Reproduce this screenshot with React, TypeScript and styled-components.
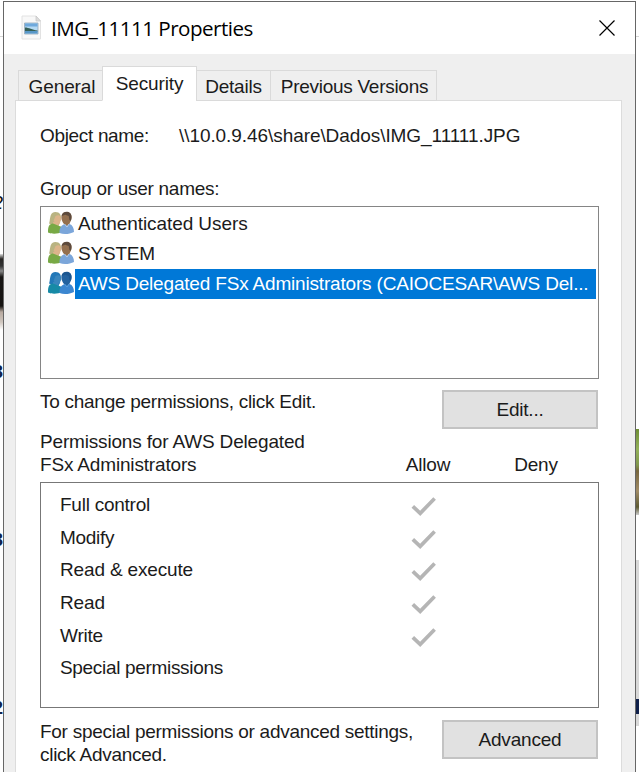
import React from 'react';
import styled, { createGlobalStyle } from 'styled-components';

const GlobalStyle = createGlobalStyle`
  * { box-sizing: border-box; }
  html, body { margin: 0; padding: 0; background: #fff; overflow: hidden; }
`;

const Desktop = styled.div`
  display: grid;
  grid-template-columns: 3px 633px 3px;
  width: 639px;
  height: 772px;
  overflow: hidden;
  background: #fff;
  color: #1b1b1b;
  font: 19px/24px 'Liberation Sans', Arial, sans-serif;
  white-space: nowrap;
`;

const Edge = styled.div`
  display: flex;
  flex-direction: column;
  min-width: 0;
  overflow: hidden;
`;

const EdgeBlock = styled.div<{ $gap: number; $h: number; $bg: string }>`
  flex: none;
  margin-top: ${p => p.$gap}px;
  height: ${p => p.$h}px;
  background: ${p => p.$bg};
`;

const EdgeGlyph = styled.div<{ $gap: number; $color: string; $italic?: boolean }>`
  flex: none;
  display: flex;
  justify-content: flex-end;
  margin-top: ${p => p.$gap}px;
  height: 20px;
  line-height: 20px;
  font-size: 19px;
  font-style: ${p => (p.$italic ? 'italic' : 'normal')};
  font-weight: ${p => (p.$italic ? 400 : 700)};
  color: ${p => p.$color};
`;

const Window = styled.main`
  display: flex;
  flex-direction: column;
  margin-top: 1px;
  height: 780px;
  border: 1px solid #666;
  background: #efefef;
`;

const TitleBar = styled.header`
  flex: none;
  display: flex;
  align-items: center;
  height: 52px;
  padding: 0 19px 0 17px;
  background: #fff;
`;

const Title = styled.h1`
  flex: 1;
  margin: 0 0 0 8px;
  font: 400 20.6px/28px 'Open Sans', 'Noto Sans', sans-serif;
  letter-spacing: -0.52px;
  color: #000;
`;

const CloseButton = styled.button`
  display: flex;
  padding: 0;
  border: 0;
  background: none;
`;

const Tabs = styled.nav`
  flex: none;
  display: flex;
  align-items: flex-end;
  height: 47px;
  padding-left: 14px;
  margin-bottom: -1px;
  z-index: 1;
`;

const Tab = styled.button<{ $w: number; $active?: boolean; $ls?: number; $indent?: number }>`
  width: ${p => p.$w}px;
  height: ${p => (p.$active ? 35 : 31)}px;
  padding: ${p => (p.$active ? '0' : `3px 0 0 ${p.$indent ?? 2}px`)};
  border: 1px solid #dadada;
  border-bottom-color: ${p => (p.$active ? '#fff' : '#dadada')};
  margin-right: -1px;
  background: ${p => (p.$active ? '#fff' : '#efefef')};
  color: inherit;
  font: inherit;
  letter-spacing: ${p => p.$ls ?? -0.12}px;
  text-align: center;
`;

const Panel = styled.section`
  flex: 1;
  width: 607px;
  margin-left: 11px;
  padding: 23px 22px 0 24px;
  border: 1px solid #dcdcdc;
  background: #fff;
`;

const ObjectRow = styled.div`
  display: grid;
  grid-template-columns: 139px 1fr;
  height: 53px;
`;

const Text = styled.span<{ $ls?: number }>`
  letter-spacing: ${p => p.$ls ?? 0}px;
`;

const Label = styled.div`
  height: 29px;
`;

const UserList = styled.div`
  width: 559px;
  height: 173px;
  padding: 2px 2px 0 7px;
  border: 1px solid #858585;
`;

const UserRow = styled.div`
  display: flex;
  height: 30px;
`;

const UserName = styled.div<{ $selected?: boolean }>`
  flex: 1;
  margin-left: 1px;
  padding-left: 3px;
  line-height: 30px;
  background: ${p => (p.$selected ? '#0078d7' : 'transparent')};
  color: ${p => (p.$selected ? '#fff' : 'inherit')};
`;

const ActionRow = styled.div<{ $top: number; $h: number }>`
  display: flex;
  justify-content: space-between;
  width: 558px;
  height: ${p => p.$h}px;
  padding-top: ${p => p.$top}px;
`;

const Button = styled.button`
  width: 156px;
  height: 39px;
  padding: 0;
  border: 2px solid #c3c3c3;
  background: #e1e1e1;
  color: inherit;
  font: inherit;
  letter-spacing: -0.2px;
`;

const Paragraph = styled.div`
  line-height: 23px;
  letter-spacing: -0.275px;
`;

const PermissionHeader = styled.div`
  display: grid;
  grid-template-columns: 334px 108px 108px;
  align-items: end;
  height: 52px;
  padding-bottom: 6px;
  line-height: 23px;
  letter-spacing: -0.17px;
`;

const ColumnName = styled.div`
  text-align: center;
`;

const PermissionList = styled.div`
  width: 559px;
  height: 226px;
  padding: 5px 0 0 19px;
  border: 1px solid #777;
`;

const PermissionRow = styled.div`
  display: grid;
  grid-template-columns: 350px 1fr;
  height: 32.7px;
  line-height: 33px;
`;

const CheckSvg = styled.svg`
  display: block;
  margin-top: 8px;
`;

function ImageFileIcon() {
  return (
    <svg width="22" height="26" viewBox="0 0 22 26">
      <path d="M1 1h14l4.5 5v18H1z" fill="#f8f8f8" stroke="#e2e2e2" />
      <path d="M15 1v5h4.5z" fill="#ddd" stroke="#c5c5c5" strokeWidth=".7" />
      <path d="M3.5 8h13.5v11H3.5z" fill="#b5daf4" stroke="#93a5b5" strokeWidth=".8" />
      <path d="M4 8.5h12.5v3H4z" fill="#6fa9dd" />
      <path d="M4 12.5c4 0 7 2.5 12.5 3v1H4z" fill="#355f55" />
      <path d="M4 16h12.5v2.5H4z" fill="#5797c8" />
    </svg>
  );
}

function UsersIcon({ selected }: { selected?: boolean }) {
  const c = selected
    ? { hair: '#2378b8', face: '#3a86bd', top: '#178aa6', hair2: '#1c5690', face2: '#23629f', top2: '#3b86d0', collar: '#5b9fdc' }
    : { hair: '#b9b381', face: '#dcb48a', top: '#78a945', hair2: '#5d4a3c', face2: '#94704f', top2: '#7ba6da', collar: '#b7cfec' };
  return (
    <svg width="26" height="26" viewBox="0 0 26 26">
      <path d="M1 14.5C2.5 12 1 3.2 7 3c5-.2 6.2 3 6 7l-2 6H5z" fill={c.hair} />
      <path d="M7.5 7c2-1.5 4.5-1 5 1l.8 3-1 .8-.3 2.7-3 .5-3.5-3z" fill={c.face} />
      <path d="M5 13h5l1 4H5z" fill={c.face} />
      <path d="M0 23.5C0 17 1.2 15 5 14.5l5 2 4 1.5v5c-4 2-10 2.3-14 .5z" fill={c.top} />
      <path d="M13.8 11c-1.4-5 .7-8 4.8-8 4.3 0 6 4 4.4 8.5-1 2.8-2.4 4-4.6 4-2.6 0-3.5-1.5-4.6-4.5z" fill={c.face2} />
      <path d="M13.7 7c.5-3.2 3-4.4 5.5-4.2 4 .3 5.4 4.7 3.6 9l-1.4-.8-.7-4-3.5-1.3z" fill={c.hair2} />
      <path d="M16.5 13h5v4h-5z" fill={c.face2} />
      <path d="M11.5 24c0-5 1-7 5-9l2.5 2 2.5-2c3 1 4.5 4 4.5 8-4 2-10 3-14.5 1z" fill={c.top2} />
      <path d="m16.5 15 2.5 3 2-3" fill="none" stroke={c.collar} />
    </svg>
  );
}

function Check() {
  return (
    <CheckSvg width="28" height="22" viewBox="0 0 28 22">
      <path d="m2.8 10.3 7.4 7L24.6 2.5" fill="none" stroke="#b5b5b5" strokeWidth="3.7" />
    </CheckSvg>
  );
}

const users = [
  { name: 'Authenticated Users', ls: -0.08 },
  { name: 'SYSTEM', ls: -0.2 },
  { name: 'AWS Delegated FSx Administrators (CAIOCESAR\\AWS Del...', ls: -0.18, selected: true },
];

const permissions = [
  { name: 'Full control', ls: -0.25, allow: true },
  { name: 'Modify', ls: -0.3, allow: true },
  { name: 'Read & execute', ls: -0.16, allow: true },
  { name: 'Read', ls: -0.1, allow: true },
  { name: 'Write', ls: -0.2, allow: true },
  { name: 'Special permissions', ls: -0.32, allow: false },
];

export default function App() {
  return (
    <>
      <GlobalStyle />
      <Desktop>
        <Edge>
          <EdgeBlock $gap={36} $h={1} $bg="#d5d5d5" />
          <EdgeGlyph $gap={156} $color="#111" $italic>2</EdgeGlyph>
          <EdgeBlock $gap={41} $h={76} $bg="linear-gradient(#ddd 0, #272523 5px, #333 12px, #888 17px, #171513 23px, #151311 52px, #b8aaa0 58px, #cfc6be 68px, #fff)" />
          <EdgeGlyph $gap={32} $color="#10214b">3</EdgeGlyph>
          <EdgeGlyph $gap={148} $color="#10214b">3</EdgeGlyph>
          <EdgeGlyph $gap={148} $color="#10214b">2</EdgeGlyph>
        </Edge>
        <Window>
          <TitleBar>
            <ImageFileIcon />
            <Title>IMG_11111 Properties</Title>
            <CloseButton aria-label="Close">
              <svg width="18" height="18" viewBox="0 0 18 18">
                <path d="m1.5 1.5 15 15m0-15-15 15" stroke="#000" strokeWidth="1.2" />
              </svg>
            </CloseButton>
          </TitleBar>
          <Tabs>
            <Tab $w={85} $indent={3}>General</Tab>
            <Tab $w={95} $active>Security</Tab>
            <Tab $w={75} $indent={0} $ls={-0.2}>Details</Tab>
            <Tab $w={167} $ls={-0.28}>Previous Versions</Tab>
          </Tabs>
          <Panel>
            <ObjectRow>
              <Text $ls={-0.33}>Object name:</Text>
              <Text $ls={-0.07}>{'\\\\10.0.9.46\\share\\Dados\\IMG_11111.JPG'}</Text>
            </ObjectRow>
            <Label><Text $ls={-0.28}>Group or user names:</Text></Label>
            <UserList>
              {users.map(u => (
                <UserRow key={u.name}>
                  <UsersIcon selected={u.selected} />
                  <UserName $selected={u.selected}><Text $ls={u.ls}>{u.name}</Text></UserName>
                </UserRow>
              ))}
            </UserList>
            <ActionRow $top={11} $h={51}>
              <Text $ls={-0.27}>To change permissions, click Edit.</Text>
              <Button>Edit...</Button>
            </ActionRow>
            <PermissionHeader>
              <div>Permissions for AWS Delegated<br />FSx Administrators</div>
              <ColumnName>Allow</ColumnName>
              <ColumnName>Deny</ColumnName>
            </PermissionHeader>
            <PermissionList>
              {permissions.map(p => (
                <PermissionRow key={p.name}>
                  <Text $ls={p.ls}>{p.name}</Text>
                  {p.allow && <Check />}
                </PermissionRow>
              ))}
            </PermissionList>
            <ActionRow $top={12} $h={64}>
              <Paragraph>For special permissions or advanced settings,<br />click Advanced.</Paragraph>
              <Button>Advanced</Button>
            </ActionRow>
          </Panel>
        </Window>
        <Edge>
          <EdgeBlock $gap={36} $h={1} $bg="#d5d5d5" />
          <EdgeBlock $gap={392} $h={86} $bg="linear-gradient(#6f8f35, #93b15a 20px, #81984d 36px, #78673f 42px, #a18c67 62px, #5d5a32 78px, #ccc)" />
          <EdgeBlock $gap={45} $h={139} $bg="#d8d8d8" />
          <EdgeBlock $gap={0} $h={15} $bg="#10214b" />
          <EdgeBlock $gap={0} $h={12} $bg="#d8d8d8" />
        </Edge>
      </Desktop>
    </>
  );
}
